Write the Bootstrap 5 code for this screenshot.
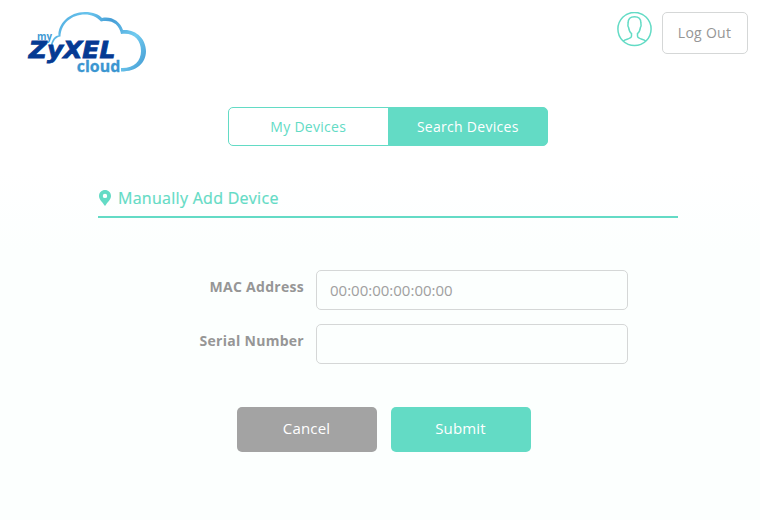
<!DOCTYPE html>
<html lang="en">
<head>
<meta charset="utf-8">
<meta name="viewport" content="width=device-width, initial-scale=1">
<title>myZyXELcloud - Search Devices</title>
<link rel="stylesheet" href="https://cdn.jsdelivr.net/npm/bootstrap@5.3.0/dist/css/bootstrap.min.css">
<style>
:root { --mint: #63dbc5; --grey-text: #969696; --line: #d5d7d7; }
body { font-family: "Open Sans", sans-serif; font-size: 14px; color: var(--grey-text); height: 520px; overflow: hidden;
  background: linear-gradient(#fff 0, #fff 170px, #fcfffe 250px, #fcfffe 100%); }
.site-header { height: 107px; padding: 12px 12px 0 20px; }
.site-logo { width: 135px; height: 66px; display: block; }
.account-icon { width: 36px; height: 36px; margin-right: 10px; display: block; }
.btn { font-size: 14px; letter-spacing: .28px; --bs-btn-border-radius: 5px; }
.btn-logout { width: 86px; height: 42px; padding: 0 1px 2px 0; color: var(--grey-text); border-color: var(--line); background: #fff; }
.device-tabs { width: 320px; height: 39px; margin-left: 228px; }
.device-tabs .btn { width: 160px; padding: 0; border-color: var(--mint); }
.tab-plain { color: var(--mint); background: #fff; }
.tab-current, .tab-current:hover { color: #fff; background: var(--mint); }
.section-title { width: 580px; margin: 42px 0 0 98px; height: 30px; border-bottom: 2px solid var(--mint); color: var(--mint); font-size: 16px; line-height: 20px; letter-spacing: .29px; -webkit-text-stroke: .2px currentColor; }
.pin-icon { width: 12px; height: 17px; margin: 2px 7px 0 1px; }
.device-form { width: 530px; margin: 52px 0 0 98px; }
.field-row { height: 40px; margin-bottom: 14px; }
.field-label { width: 206px; font-weight: 700; line-height: 20px; padding-top: 7px; letter-spacing: .28px; }
.field-input { width: 312px; height: 40px; border-color: var(--line); border-radius: 5px; padding: 0 13px; font-size: 15px; background: transparent; }
.field-input::placeholder { color: #a0a0a0; opacity: 1; }
.form-actions { gap: 14px; margin: 43px 0 0 237px; }
.form-actions .btn { width: 140px; height: 45px; padding: 0 1px 2px 0; border: 0; color: #fff; font-size: 15px; letter-spacing: .15px; }
.btn-cancel { background: #a3a3a3; }
.btn-submit { background: var(--mint); }
</style>
</head>
<body>
<header class="site-header d-flex justify-content-between align-items-start">
  <svg class="site-logo" viewBox="20 12 135 66" role="img" aria-label="myZyXELcloud">
    <defs>
      <linearGradient id="sky" x1="50" y1="12" x2="146" y2="72" gradientUnits="userSpaceOnUse">
        <stop offset="0" stop-color="#4ba6dc"/><stop offset=".3" stop-color="#68c4ed"/><stop offset=".5" stop-color="#459dd6"/><stop offset=".75" stop-color="#72ccf0"/><stop offset="1" stop-color="#3f96d0"/>
      </linearGradient>
    </defs>
    <path fill="url(#sky)" d="M50.500 46C52 40 54 36 58.500 35.500C58 24 69 12 85 12C93 12 99 14.500 102 18C111 16 120 21 123 30C136 29 146 39 146 51C146 63 137 71.500 121 71.500V68C134 68.500 141 61 141 51C141 39 133 32 121 34C119 24 112 19.500 101 21.500C97 17 91 14.500 85 14.500C71 14.500 61 24 60.500 36.500C56 37 53 41 52.500 46Z"/>
    <text x="37" y="40" font-family="Open Sans, sans-serif" font-weight="700" font-size="10.500" fill="#3f9ad4" textLength="15" lengthAdjust="spacingAndGlyphs">my</text>
    <text x="28.800" y="58.200" font-family="DejaVu Sans, sans-serif" font-weight="700" font-style="italic" font-size="22.500" fill="#053a93" stroke="#053a93" stroke-width=".8" textLength="86.500" lengthAdjust="spacingAndGlyphs">ZyXEL</text>
    <text x="76.800" y="71.500" font-family="Open Sans, sans-serif" font-weight="700" font-size="15.500" fill="#3b96d1" stroke="#3b96d1" stroke-width=".3" textLength="43.500" lengthAdjust="spacingAndGlyphs">cloud</text>
  </svg>
  <div class="d-flex align-items-start">
    <svg class="account-icon" viewBox="0 0 36 36" fill="none" stroke="#63dbc5" stroke-width="1.500" role="img" aria-label="Account">
      <circle cx="18.500" cy="17" r="16.600"/>
      <path d="M7.300 29C9.500 27 15.500 27 15.500 24V21.500C13.300 20 13 18 12.600 15.500C11.600 14 11.800 12.500 12.100 11C12.100 7 14.300 4.800 18.500 4.800S24.900 7 24.900 11C25.200 12.500 25.400 14 24.400 15.500C24 18 23.700 20 21.500 21.500V24C21.500 27 27.500 27 29.700 29"/>
    </svg>
    <button type="button" class="btn btn-logout">Log Out</button>
  </div>
</header>
<main>
  <div class="device-tabs btn-group d-flex" role="group" aria-label="Devices">
    <button type="button" class="btn tab-plain">My Devices</button>
    <button type="button" class="btn tab-current">Search Devices</button>
  </div>
  <h1 class="section-title d-flex fw-normal">
    <svg class="pin-icon" viewBox="0 0 12 17" aria-hidden="true"><path fill="#63dbc5" fill-rule="evenodd" d="M6 0C2.700 0 0 2.500 0 5.900C0 9.500 3.500 12 6 16C8.500 12 12 9.500 12 5.900C12 2.500 9.300 0 6 0ZM6 3.700A2.200 2.200 0 1 1 6 8.100A2.200 2.200 0 1 1 6 3.700Z"/></svg>
    <span>Manually Add Device</span>
  </h1>
  <form>
    <div class="device-form">
      <div class="field-row d-flex justify-content-between">
        <label class="field-label text-end" for="mac">MAC Address</label>
        <input class="form-control field-input" id="mac" type="text" placeholder="00:00:00:00:00:00">
      </div>
      <div class="field-row d-flex justify-content-between mb-0">
        <label class="field-label text-end" for="serial">Serial Number</label>
        <input class="form-control field-input" id="serial" type="text">
      </div>
    </div>
    <div class="form-actions d-flex">
      <button type="button" class="btn btn-cancel">Cancel</button>
      <button type="button" class="btn btn-submit">Submit</button>
    </div>
  </form>
</main>
<script src="https://cdn.jsdelivr.net/npm/bootstrap@5.3.0/dist/js/bootstrap.bundle.min.js"></script>
</body>
</html>
